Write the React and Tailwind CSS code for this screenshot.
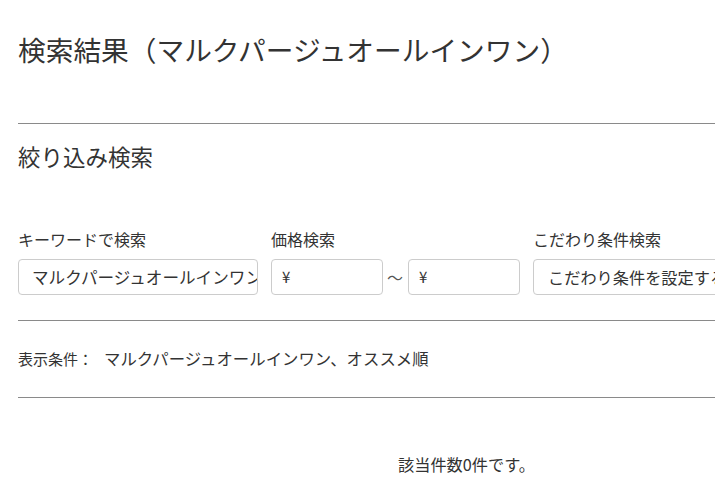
export default function App() {
  const font = { fontFamily: '"Noto Sans CJK JP", "Noto Sans", sans-serif' };
  return (
    <div className="min-h-[503px] bg-white text-[#333]" style={font}>
      <div className="ml-[18px] w-[892px]">
        <h1 className="pt-[31px] text-[27.7px] leading-[36px] font-normal">検索結果（マルクパージュオールインワン）</h1>
        <hr className="mt-[56px] border-t border-[#8a8a8a]" />
        <h2 className="mt-[17px] text-[22.5px] leading-[30px] font-normal">絞り込み検索</h2>
        <div className="mt-[57px] flex items-end">
          <div className="flex flex-col">
            <label className="text-[16px] leading-[22px]">キーワードで検索</label>
            <div className="mt-[9px] flex h-[36px] w-[240px] items-center overflow-hidden rounded-[4px] border border-[#cccccc] pl-[13px] text-[16.6px] whitespace-nowrap">マルクパージュオールインワン</div>
          </div>
          <div className="ml-[13px] flex flex-col">
            <label className="text-[16px] leading-[22px]">価格検索</label>
            <div className="mt-[9px] flex items-center">
              <div className="flex h-[36px] w-[112px] items-center rounded-[4px] border border-[#cccccc] pl-[10px] text-[15px]">¥</div>
              <span className="ml-[4px] mr-[5px] text-[16px] text-[#555]">〜</span>
              <div className="flex h-[36px] w-[112px] items-center rounded-[4px] border border-[#cccccc] pl-[10px] text-[15px]">¥</div>
            </div>
          </div>
          <div className="ml-[13px] flex flex-col">
            <label className="text-[16px] leading-[22px]">こだわり条件検索</label>
            <div className="mt-[9px] flex h-[36px] w-[240px] items-center overflow-hidden rounded-[4px] border border-[#cccccc] pl-[14px] text-[16.2px] whitespace-nowrap">こだわり条件を設定する</div>
          </div>
        </div>
        <hr className="mt-[25px] border-t border-[#8a8a8a]" />
        <p className="mt-[26px] text-[15px] leading-[22px]">表示条件：<span className="ml-[11px] text-[16.4px]">マルクパージュオールインワン、オススメ順</span></p>
        <hr className="mt-[27px] border-t border-[#8a8a8a]" />
        <p className="mt-[55px] text-center text-[16.2px] leading-[22px]"><span className="ml-[5px]">該当件数0件です。</span></p>
      </div>
    </div>
  );
}
